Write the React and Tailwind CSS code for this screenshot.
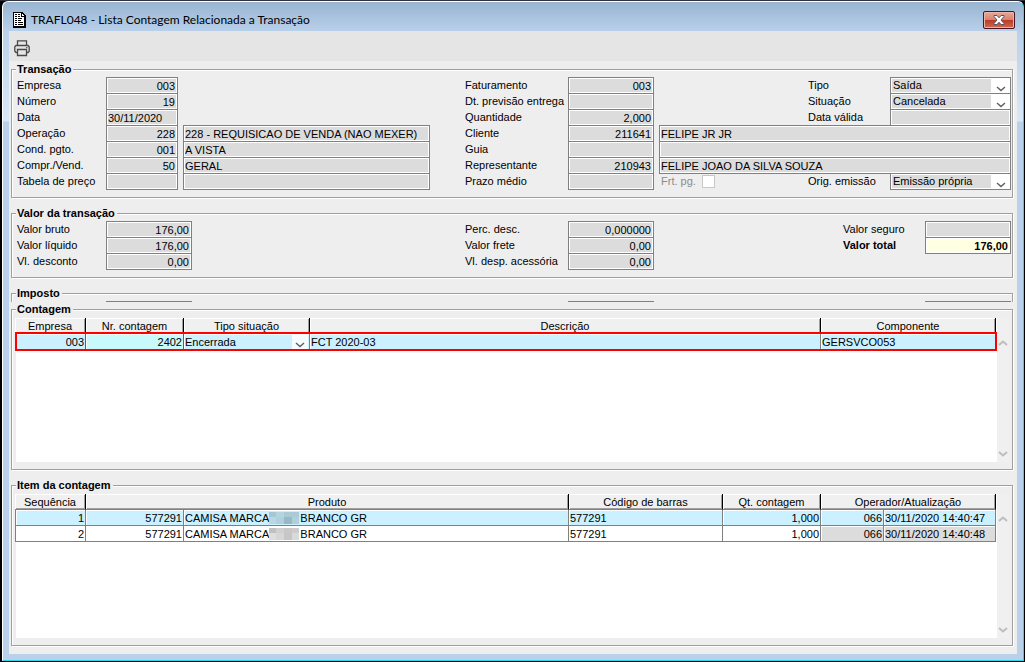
import React from 'react'

const Chevron = ({ up = false, className = '' }) => (
    <svg viewBox="0 0 10 6" width="10" height="6" fill="none" className={className}>
        <path d={up ? 'M1 5 L5 1.5 L9 5' : 'M1 1 L5 4.5 L9 1'} stroke="currentColor" />
    </svg>
)

const DocumentIcon = () => (
    <svg viewBox="0 0 13 16" width="13" height="16" shapeRendering="crispEdges" aria-hidden="true">
        <path d="M0 0 H9 L13 4 V16 H0 Z" fill="#000" />
        <path d="M1 1 H8 V5 H11 V14 H1 Z" fill="#fff" />
        <path d="M9 2 H10 V3 H11 V4 H9 Z" fill="#fff" />
        <path
            d="M2 2.5 H4 M5 2.5 H7 M2 4.5 H4 M5 4.5 H7 M2 6.5 H4 M5 6.5 H9 M2 8.5 H4 M5 8.5 H8 M2 10.5 H4 M5 10.5 H10 M2 12.5 H4 M5 12.5 H10"
            stroke="#000"
        />
    </svg>
)

const PrinterIcon = () => (
    <svg viewBox="0 0 17 17" width="17" height="17" fill="none" stroke="#484848" strokeWidth="1.3" aria-hidden="true">
        <path d="M3.5 5 V0.8 H12.5 V5" />
        <path d="M3.5 12.5 H2 L0.8 11.3 V6.7 L2 5.5 H14 L15.2 6.7 V11.3 L14 12.5 H12.5" />
        <path d="M3.5 9.5 H12.5 V15.5 H3.5 Z" />
        <path d="M12 7.7 H13.5" strokeWidth="1" />
    </svg>
)

const Panel = ({ title, className = '', children }) => (
    <fieldset
        className={`min-w-0 border border-[#a0a0a0] shadow-[1px_1px_0_#fff,inset_1px_1px_0_#fff] ${className}`}
    >
        <legend className="ml-1 h-4 bg-[#eeeeee] pl-px pr-0.5 font-bold leading-4">{title}</legend>
        {children}
    </fieldset>
)

const Row = ({ children }) => <div className="flex h-4">{children}</div>

const Label = ({ htmlFor, className = '', children }) => (
    <label htmlFor={htmlFor} className={`shrink-0 whitespace-nowrap ${className}`}>
        {children}
    </label>
)

const Field = ({ id, label, value = '', className = '' }) => (
    <input
        id={id}
        aria-label={label}
        readOnly
        value={value}
        className={`h-[17px] min-w-0 border border-[#808080] pl-px pr-0.5 pt-px leading-4 outline-none shadow-[inset_0_0_0_1px_#fff] ${className}`}
    />
)

const Select = ({ id, value }) => (
    <div className="relative h-[17px] w-[121px] shrink-0">
        <select
            id={id}
            className="block h-full w-full appearance-none border border-[#808080] bg-[#dcdcdc] px-0.5 pb-px leading-[14px] outline-none shadow-[inset_0_0_0_1px_#fff]"
        >
            <option>{value}</option>
        </select>
        <span className="pointer-events-none absolute inset-y-px right-px flex w-[19px] items-end justify-center bg-white pb-px text-[#606060]">
            <Chevron className="stroke-[1.5]" />
        </span>
    </div>
)

const leftRows = [
    { id: 'empresa', label: 'Empresa', value: '003' },
    { id: 'numero', label: 'Número', value: '19' },
    { id: 'data', label: 'Data', value: '30/11/2020', left: true },
    { id: 'operacao', label: 'Operação', value: '228', text: '228 - REQUISICAO DE VENDA (NAO MEXER)' },
    { id: 'cond', label: 'Cond. pgto.', value: '001', text: 'A VISTA' },
    { id: 'compr', label: 'Compr./Vend.', value: '50', text: 'GERAL' },
    { id: 'tabela', label: 'Tabela de preço', value: '', text: '' },
]

const rightRows = [
    { id: 'faturamento', label: 'Faturamento', value: '003', select: 'Tipo', option: 'Saída' },
    { id: 'previsao', label: 'Dt. previsão entrega', value: '', select: 'Situação', option: 'Cancelada' },
    { id: 'quantidade', label: 'Quantidade', value: '2,000', date: true },
    { id: 'cliente', label: 'Cliente', value: '211641', text: 'FELIPE JR JR' },
    { id: 'guia', label: 'Guia', value: '', text: '' },
    { id: 'representante', label: 'Representante', value: '210943', text: 'FELIPE JOAO DA SILVA SOUZA' },
    { id: 'prazo', label: 'Prazo médio', value: '', freight: true, select: 'Orig. emissão', option: 'Emissão própria' },
]

const Transaction = () => (
    <Panel title="Transação">
        <div className="flex pb-2 pl-[5px] pr-px">
            <div className="w-[448px] shrink-0">
                {leftRows.map((row) => (
                    <Row key={row.id}>
                        <Label htmlFor={row.id} className="w-[89px]">{row.label}</Label>
                        <Field
                            id={row.id}
                            value={row.value}
                            className={row.left ? 'w-[72px] bg-[#dcdcdc]' : 'w-[72px] bg-[#dcdcdc] text-right'}
                        />
                        {row.text !== undefined && (
                            <Field label={`${row.label} descrição`} value={row.text} className="ml-[5px] w-[247px] bg-[#dcdcdc]" />
                        )}
                    </Row>
                ))}
            </div>
            <div className="min-w-0 flex-1">
                {rightRows.map((row) => (
                    <Row key={row.id}>
                        <Label htmlFor={row.id} className="w-[103px]">{row.label}</Label>
                        <Field id={row.id} value={row.value} className="w-[86px] shrink-0 bg-[#dcdcdc] text-right" />
                        {row.text !== undefined && (
                            <Field label={`${row.label} nome`} value={row.text} className="ml-[5px] flex-1 bg-[#dcdcdc]" />
                        )}
                        {row.freight && (
                            <label className="ml-[7px] flex gap-1.5 text-[#8c8c8c]">
                                Frt. pg.
                                <input
                                    type="checkbox"
                                    disabled
                                    className="mt-0.5 size-[13px] appearance-none border border-[#c8c8c8] bg-white"
                                />
                            </label>
                        )}
                        {row.select && (
                            <>
                                <Label htmlFor={`${row.id}-sel`} className="ml-auto w-[82px]">{row.select}</Label>
                                <Select id={`${row.id}-sel`} value={row.option} />
                            </>
                        )}
                        {row.date && (
                            <>
                                <Label htmlFor="valida" className="ml-auto w-[82px]">Data válida</Label>
                                <Field id="valida" className="w-[121px] shrink-0 bg-[#dcdcdc]" />
                            </>
                        )}
                    </Row>
                ))}
            </div>
        </div>
    </Panel>
)

const Values = () => (
    <Panel title="Valor da transação" className="mt-[7px]">
        <div className="flex pb-2 pl-[5px] pr-px">
            <div className="w-[448px] shrink-0">
                {[['Valor bruto', '176,00'], ['Valor líquido', '176,00'], ['Vl. desconto', '0,00']].map(([label, value]) => (
                    <Row key={label}>
                        <Label htmlFor={label} className="w-[89px]">{label}</Label>
                        <Field id={label} value={value} className="w-[86px] bg-[#dcdcdc] text-right" />
                    </Row>
                ))}
            </div>
            <div>
                {[['Perc. desc.', '0,000000'], ['Valor frete', '0,00'], ['Vl. desp. acessória', '0,00']].map(([label, value]) => (
                    <Row key={label}>
                        <Label htmlFor={label} className="w-[103px]">{label}</Label>
                        <Field id={label} value={value} className="w-[86px] bg-[#dcdcdc] text-right" />
                    </Row>
                ))}
            </div>
            <div className="ml-auto">
                <Row>
                    <Label htmlFor="seguro" className="w-[82px]">Valor seguro</Label>
                    <Field id="seguro" className="w-[86px] bg-[#dcdcdc]" />
                </Row>
                <Row>
                    <Label htmlFor="total" className="w-[82px] font-bold">Valor total</Label>
                    <Field id="total" value="176,00" className="w-[86px] bg-[#ffffe1] text-right font-bold" />
                </Row>
            </div>
        </div>
    </Panel>
)

// Only the first line of this panel is visible, the rest is cut off by the grid below
const Taxes = () => (
    <div className="-mr-px mt-[7px] h-[17px] overflow-hidden pr-px">
        <Panel title="Imposto" className="h-10">
            <div className="flex pl-[94px] pr-px">
                <div className="w-[86px] border-t border-[#808080]" />
                <div className="ml-[376px] w-[86px] border-t border-[#808080]" />
                <div className="ml-auto w-[86px] border-t border-[#808080]" />
            </div>
        </Panel>
    </div>
)

const Th = ({ colSpan, children }) => (
    <th
        colSpan={colSpan}
        className="h-4 border-b border-r border-b-[#808080] border-r-black bg-[#f0f0f0] p-0 text-center font-normal leading-[14px] shadow-[inset_1px_1px_0_#fff,inset_-1px_-1px_0_#a0a0a0]"
    >
        {children}
    </th>
)

const Td = ({ className = '', children }) => (
    <td
        className={`h-4 overflow-hidden whitespace-nowrap border-b border-r border-[#808080] px-px pb-0 pt-px leading-[14px] shadow-[inset_1px_1px_0_#fff] ${className}`}
    >
        {children}
    </td>
)

const GridBox = ({ children }) => (
    <div className="flex h-36 px-[3px]">
        <div className="relative min-w-0 flex-1 pl-px">
            <div className="h-full bg-white">{children}</div>
        </div>
        <div className="flex w-3 flex-col items-center justify-between bg-[#f0f0f0] pb-[5px] pt-[22px] text-[#bdbdbd]">
            <button type="button" aria-label="Rolar para cima">
                <Chevron up className="block stroke-2" />
            </button>
            <button type="button" aria-label="Rolar para baixo">
                <Chevron className="block stroke-2" />
            </button>
        </div>
    </div>
)

const Counts = () => (
    <Panel title="Contagem" className="-mt-px pb-[7px] pt-px">
        <GridBox>
            <table className="-ml-px w-full table-fixed border-separate border-spacing-0">
                <colgroup>
                    <col className="w-[71px]" />
                    <col className="w-[98px]" />
                    <col className="w-[126px]" />
                    <col />
                    <col className="w-[175px]" />
                </colgroup>
                <thead>
                    <tr>
                        <Th>Empresa</Th>
                        <Th>Nr. contagem</Th>
                        <Th>Tipo situação</Th>
                        <Th>Descrição</Th>
                        <Th>Componente</Th>
                    </tr>
                </thead>
                <tbody className="bg-[#cbf0ff]">
                    <tr>
                        <Td className="border-r-[#0078d7] text-right">003</Td>
                        <Td className="border-r-[#0078d7] bg-[#c8fafb] text-right">2402</Td>
                        <Td>
                            <div className="relative">
                                <select
                                    aria-label="Tipo situação"
                                    className="block h-3.5 w-full appearance-none leading-[14px] outline-none"
                                >
                                    <option>Encerrada</option>
                                </select>
                                <span className="pointer-events-none absolute inset-y-0 right-0 flex w-4 items-end justify-center bg-[#f4fcff] pb-px text-[#606060]">
                                    <Chevron className="stroke-[1.5]" />
                                </span>
                            </div>
                        </Td>
                        <Td>FCT 2020-03</Td>
                        <Td>GERSVCO053</Td>
                    </tr>
                </tbody>
            </table>
            <div className="pointer-events-none absolute inset-x-0 top-3.5 h-[19px] border-2 border-[#ff0000]" />
        </GridBox>
    </Panel>
)

const Mosaic = ({ colors }) => (
    <svg viewBox="0 0 30 12" width="30" height="12" className="mr-px inline-block align-middle" shapeRendering="crispEdges" aria-hidden="true">
        {colors.map((color, i) => (
            <rect key={i} x={(i % 4) * 8 - 1} y={i < 4 ? 0 : 5} width="8" height={i < 4 ? 5 : 7} fill={color} />
        ))}
    </svg>
)

const items = [
    {
        seq: 1,
        time: '30/11/2020 14:40:47',
        row: 'bg-[#cbf0ff]',
        operator: '',
        colors: ['#a5c6d2', '#b3d5e1', '#a9cad6', '#a9cad6', '#b7d9e5', '#afd0dc', '#98b8c5', '#add0dc'],
    },
    {
        seq: 2,
        time: '30/11/2020 14:40:48',
        row: 'bg-white',
        operator: 'bg-[#dcdcdc]',
        colors: ['#c0c0c0', '#d0d0d0', '#c8c8c8', '#cccccc', '#dedede', '#d6d6d6', '#c6c6c6', '#dadada'],
    },
]

const CountItems = () => (
    <Panel title="Item da contagem" className="mt-[7px] pb-[7px] pt-px">
        <GridBox>
            <table className="-ml-px w-full table-fixed border-separate border-spacing-0">
                <colgroup>
                    <col className="w-[71px]" />
                    <col className="w-[98px]" />
                    <col />
                    <col className="w-[154px]" />
                    <col className="w-[98px]" />
                    <col className="w-[63px]" />
                    <col className="w-[112px]" />
                </colgroup>
                <thead>
                    <tr>
                        <Th>Sequência</Th>
                        <Th colSpan={2}>Produto</Th>
                        <Th>Código de barras</Th>
                        <Th>Qt. contagem</Th>
                        <Th colSpan={2}>Operador/Atualização</Th>
                    </tr>
                </thead>
                <tbody>
                    {items.map((item) => (
                        <tr key={item.seq} className={item.row}>
                            <Td className="border-l text-right">{item.seq}</Td>
                            <Td className="text-right">577291</Td>
                            <Td>
                                <span className="flex h-[14px] items-center">
                                    CAMISA MARCA
                                    <Mosaic colors={item.colors} />
                                    BRANCO GR
                                </span>
                            </Td>
                            <Td>577291</Td>
                            <Td className="text-right">1,000</Td>
                            <Td className={`text-right ${item.operator}`}>066</Td>
                            <Td className={item.operator}>{item.time}</Td>
                        </tr>
                    ))}
                </tbody>
            </table>
        </GridBox>
    </Panel>
)

const App = () => {
    return (
        <div className="min-h-screen border-b border-r border-t border-black border-t-[#30303a] bg-black pl-0.5 font-['Liberation_Sans',Arial,sans-serif] text-[11px] leading-4 text-black">
            <div className="rounded-t-md border-b border-l border-r border-t border-b-[#2ed4ea] border-l-white border-r-[#2ed4ea] border-t-white bg-[linear-gradient(180deg,#99b4d1_0px,#b9d1ea_30px,#d9e8f8_119px,#b9d1ea_120px)] px-1.5 pb-1.5">
                <header className="flex h-[29px] items-center justify-between pr-0.5">
                    <div className="flex items-center gap-[5px] pl-1 pt-1.5 font-[Lato,sans-serif] text-xs">
                        <DocumentIcon />
                        <h1>TRAFL048 - Lista Contagem Relacionada a Transação</h1>
                    </div>
                    <button
                        type="button"
                        aria-label="Fechar"
                        className="mt-1.5 flex h-[18px] w-8 items-center justify-center rounded-xs border border-[#4a1420] bg-[linear-gradient(180deg,#e9a99b_0%,#d9806f_48%,#bb3a22_50%,#cf6a50_100%)] shadow-[inset_0_0_0_1px_#eab5aa]"
                    >
                        <svg viewBox="0 0 12 10" width="12" height="10" aria-hidden="true">
                            <path
                                d="M1 0.5 H4 L6 2.8 L8 0.5 H11 V1.5 L8 5 L11 8.5 V9.5 H8 L6 7.2 L4 9.5 H1 V8.5 L4 5 L1 1.5 Z"
                                fill="#fff"
                                stroke="#535666"
                            />
                        </svg>
                    </button>
                </header>
                <main className="bg-[#eeeeee]">
                    <div className="flex h-[30px] items-center bg-[#e5e5e5] pl-[5px] pt-1">
                        <button type="button" aria-label="Imprimir">
                            <PrinterIcon />
                        </button>
                    </div>
                    <div className="pb-2 pl-0.5 pr-1">
                        <Transaction />
                        <Values />
                        <Taxes />
                        <Counts />
                        <CountItems />
                    </div>
                </main>
            </div>
        </div>
    )
}

export default App
